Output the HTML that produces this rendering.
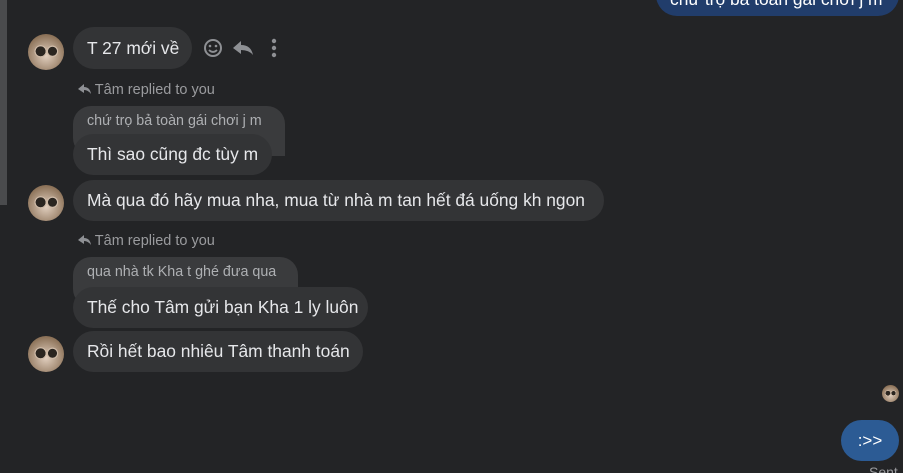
<!DOCTYPE html><html><head><meta charset="utf-8"><style>
html,body{margin:0;width:903px;height:473px;overflow:hidden}
body{background:#232426;position:relative;font-family:"Liberation Sans",sans-serif;color:#e4e6eb}
.a{position:absolute}
.b{position:absolute;background:#333436;border-radius:21px;height:41px;line-height:41px;font-size:17.4px;padding:0 14px;box-sizing:border-box;color:#e6e7ea;white-space:nowrap}
.q{position:absolute;background:#3a3b3d;border-radius:18px 18px 0 18px;font-size:14.3px;color:#aeb0b3;padding:7px 14px 0;box-sizing:border-box;white-space:nowrap}
.av{position:absolute;width:36px;height:36px;border-radius:50%;background:radial-gradient(circle at 35% 48%,#2a2520 0 16%,#cdb9a6 17% 20%,transparent 21%),radial-gradient(circle at 68% 48%,#2a2520 0 14%,#cdb9a6 15% 18%,transparent 19%),radial-gradient(circle at 50% 60%,#e2d0c0,#8a7056 75%)}
.r{position:absolute;font-size:14.5px;color:#9a9b9e}
</style></head><body>
<div class="a" style="left:0;top:0;width:7px;height:205px;background:#4a4b4d"></div>
<div class="a" style="left:656px;top:-26px;width:243px;height:42px;border-radius:21px;background:#213d6b;color:#fff;font-size:17.4px;line-height:50px;padding-left:14px;box-sizing:border-box;overflow:hidden;white-space:nowrap">chứ trọ bả toàn gái chơi j m</div>

<div class="av" style="left:28px;top:34px"></div>
<div class="b" style="left:73px;top:27px;width:119px;height:42px;line-height:42px">T 27 mới về</div>
<svg class="a" style="left:202px;top:37px" width="84" height="22" viewBox="0 0 84 22">
<circle cx="11" cy="11" r="8" fill="none" stroke="#8e9094" stroke-width="2"/><circle cx="8" cy="9" r="1.3" fill="#8e9094"/><circle cx="14" cy="9" r="1.3" fill="#8e9094"/><path d="M7 13q4 4 8 0" fill="none" stroke="#8e9094" stroke-width="1.8"/>
<path d="M31 11l8-7v4q10 0 12 10q-4-5-12-5v4z" fill="#8e9094"/>
<circle cx="72" cy="4" r="2.2" fill="#8e9094"/><circle cx="72" cy="11" r="2.2" fill="#8e9094"/><circle cx="72" cy="18" r="2.2" fill="#8e9094"/></svg>

<div class="r" style="left:77px;top:82px"><svg width="14" height="14" viewBox="0 0 14 14" style="vertical-align:-2px"><path d="M1 7l6-5v3q6 0 7 7q-3-4-7-4v3z" fill="#8e9094"/></svg> Tâm replied to you</div>
<div class="q" style="left:73px;top:106px;width:212px;height:50px">chứ trọ bả toàn gái chơi j m</div>
<div class="b" style="left:73px;top:134px;width:199px">Thì sao cũng đc tùy m</div>

<div class="av" style="left:28px;top:185px"></div>
<div class="b" style="left:73px;top:180px;width:531px">Mà qua đó hãy mua nha, mua từ nhà m tan hết đá uống kh ngon</div>

<div class="r" style="left:77px;top:233px"><svg width="14" height="14" viewBox="0 0 14 14" style="vertical-align:-2px"><path d="M1 7l6-5v3q6 0 7 7q-3-4-7-4v3z" fill="#8e9094"/></svg> Tâm replied to you</div>
<div class="q" style="left:73px;top:257px;width:225px;height:50px">qua nhà tk Kha t ghé đưa qua</div>
<div class="b" style="left:73px;top:287px;width:295px">Thế cho Tâm gửi bạn Kha 1 ly luôn</div>
<div class="av" style="left:28px;top:336px"></div>
<div class="b" style="left:73px;top:331px;width:290px">Rồi hết bao nhiêu Tâm thanh toán</div>

<div class="av" style="left:882px;top:385px;width:17px;height:17px"></div>
<div class="a" style="left:841px;top:420px;width:58px;height:41px;border-radius:21px;background:#2c5b94;color:#fff;font-size:17px;line-height:41px;text-align:center">:&gt;&gt;</div>
<div class="a" style="left:869px;top:464px;font-size:14px;color:#9a9b9e">Sent</div>
</body></html>
